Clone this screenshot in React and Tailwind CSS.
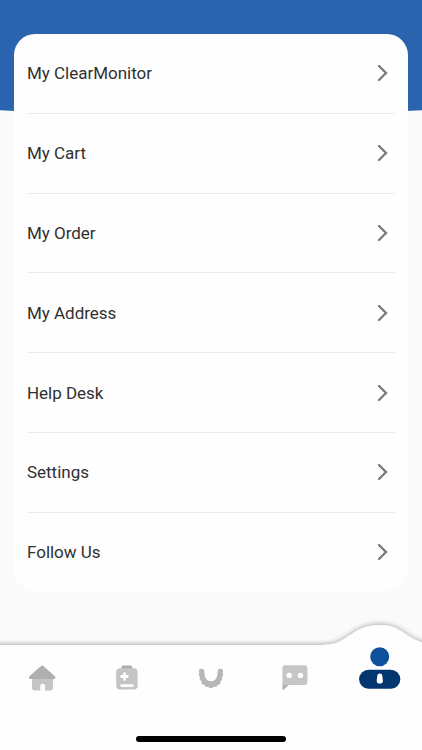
import React from "react";

const items = ["My ClearMonitor", "My Cart", "My Order", "My Address", "Help Desk", "Settings", "Follow Us"];

function Chevron() {
  return (
    <svg className="mr-[7px] shrink-0" width="11" height="18" viewBox="0 0 11 18" fill="none" stroke="#7b7b7b" strokeWidth="2.4" strokeLinecap="round" strokeLinejoin="miter">
      <path d="M2 2L9 9L2 16" />
    </svg>
  );
}

function HomeIcon() {
  return (
    <svg width="28" height="26" viewBox="0 0 28 26">
      <path d="M4 11H25V23Q25 25.4 22.6 25.4H17V20.5Q17 18.8 14.5 18.8Q12.3 18.8 12.3 20.5V25.4H6.4Q4 25.4 4 23Z" fill="#c5c5c5" />
      <path d="M13 1.1Q14.2 0.1 15.4 1.1L27.2 11.6Q28 13.8 26.3 13.9H2Q0.4 13.8 1.2 11.6Z" fill="#afafaf" />
    </svg>
  );
}

function KitIcon() {
  return (
    <svg width="22" height="25" viewBox="0 0 22 25">
      <path d="M5.5 4V2Q5.5 0.4 7.2 0.4H14.3Q16.2 0.4 16.2 2V4Z" fill="#adadad" />
      <rect x="0.2" y="3.2" width="21.4" height="21.3" rx="4" fill="#c4c4c4" />
      <path d="M8.5 8.6V14.4M5.6 11.5H11.4" stroke="#fff" strokeWidth="2.8" strokeLinecap="round" />
      <path d="M5.6 20.6H16.6" stroke="#fff" strokeWidth="2.6" strokeLinecap="round" />
    </svg>
  );
}

function TeethIcon() {
  return (
    <svg width="26" height="22" viewBox="0 0 26 22">
      <path d="M3.8 3.2C4 10.5 7 15.8 13 15.8S22 10.5 22.2 3.2" fill="none" stroke="#b7b7b7" strokeWidth="5" strokeLinecap="round" />
      <g fill="#b7b7b7">
        <circle cx="3.3" cy="3" r="2.3" />
        <circle cx="3.1" cy="6.8" r="2.3" />
        <circle cx="4" cy="10.6" r="2.4" />
        <circle cx="6" cy="14.2" r="2.5" />
        <circle cx="9" cy="16.5" r="2.5" />
        <circle cx="13" cy="17.5" r="2.7" />
        <circle cx="17" cy="16.5" r="2.5" />
        <circle cx="20" cy="14.2" r="2.5" />
        <circle cx="22" cy="10.6" r="2.4" />
        <circle cx="22.9" cy="6.8" r="2.3" />
        <circle cx="22.7" cy="3" r="2.3" />
      </g>
    </svg>
  );
}

function ChatIcon() {
  return (
    <svg width="26" height="26" viewBox="0 0 26 26">
      <path d="M3.2 0.3H22.4Q25.4 0.3 25.4 3.3V17Q25.4 20 22.4 20H0.4V3.3Q0.4 0.3 3.2 0.3Z" fill="#c6c6c6" />
      <path d="M0.4 20H6.7L1.6 24.8Q0.4 25.6 0.4 24.2Z" fill="#b2b2b2" />
      <circle cx="7.2" cy="10.4" r="2.7" fill="#fff" />
      <circle cx="18.4" cy="10.4" r="2.7" fill="#fff" />
    </svg>
  );
}

function ProfileIcon() {
  return (
    <svg width="42" height="43" viewBox="0 0 42 43">
      <circle cx="20.7" cy="9.7" r="9.5" fill="#0d509b" />
      <rect x="0.1" y="22.7" width="41.2" height="19" rx="9.5" fill="#03366f" />
      <path d="M18.3 28.5Q18.5 26.5 20.8 26.5Q23.1 26.5 23.3 28.5L23.9 33.4Q23.9 36.6 20.8 36.6Q17.7 36.6 17.7 33.4Z" fill="#fff" />
    </svg>
  );
}

export default function App() {
  return (
    <div className="flex h-[750px] w-[422px] flex-col overflow-hidden bg-[#fafafa] font-['Roboto',sans-serif]">
      <header className="h-[125px] shrink-0">
        <svg width="422" height="125" viewBox="0 0 422 125">
          <path d="M0 0H422V110.3Q211 122 0 110.3Z" fill="#2a63ae" />
        </svg>
      </header>
      <main className="relative mx-[14px] -mt-[91px] h-[557px] shrink-0 rounded-[21px] bg-[#fefefe] px-[13px]">
        {items.map((label, i) => (
          <div
            key={label}
            className={`flex h-[79.8px] items-center justify-between ${i < 6 ? "border-b border-[#ececec]" : "pb-px"}`}
          >
            <span className="text-[17px] leading-5 tracking-[-0.02px] text-[#303030]">{label}</span>
            <Chevron />
          </div>
        ))}
      </main>
      <footer className="relative mt-[24px] h-[135px] shrink-0">
        <svg className="absolute inset-0" width="422" height="135" viewBox="0 0 422 135">
          <defs>
            <filter id="edge" x="-20" y="-10" width="470" height="180" filterUnits="userSpaceOnUse">
              <feDropShadow dx="0" dy="-1" stdDeviation="2.5" floodColor="#000" floodOpacity="0.32" />
            </filter>
          </defs>
          <path d="M-10 30H322C350 30 350 10 380 10C405 10 406 28 436 30V150H-10Z" fill="#fefefe" filter="url(#edge)" />
        </svg>
        <nav className="relative flex h-[125px] items-start pt-[32px]">
          <div className="flex w-[84.4px] justify-center pt-[18px]"><HomeIcon /></div>
          <div className="flex w-[84.4px] justify-center pt-[18px]"><KitIcon /></div>
          <div className="flex w-[84.4px] justify-center pt-[21px]"><TeethIcon /></div>
          <div className="flex w-[84.4px] justify-center pt-[18px]"><ChatIcon /></div>
          <div className="flex w-[84.4px] justify-center"><ProfileIcon /></div>
        </nav>
        <div className="relative mx-auto -mt-[4px] h-[5.5px] w-[150px] rounded-full bg-black" />
      </footer>
    </div>
  );
}
